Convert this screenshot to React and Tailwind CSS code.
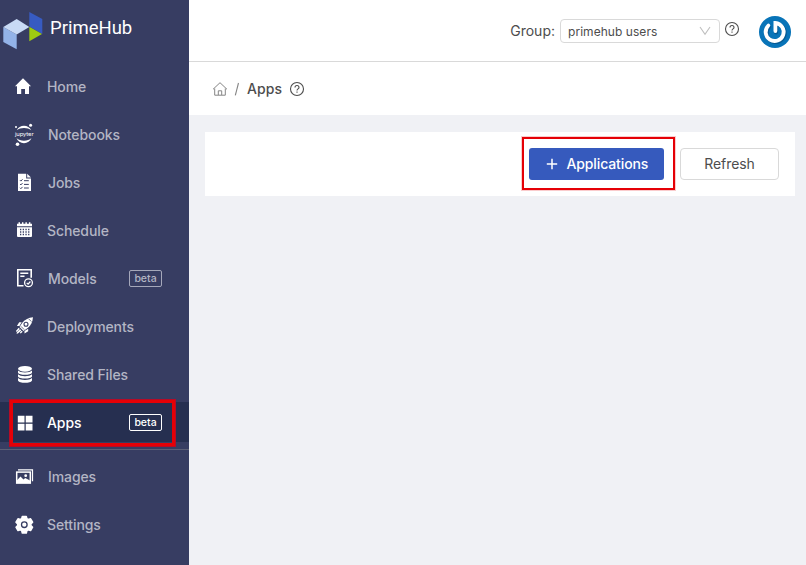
import React from 'react';

function Icon({ children }) {
  return (
    <svg width="24" height="24" viewBox="0 0 24 24" fill="#fff" className="shrink-0">
      {children}
    </svg>
  );
}

const HomeIcon = (
  <Icon>
    <path d="M11 3.200 19 11.200h-2V19h-4v-5H9.200v5H5v-7.800H3z" />
  </Icon>
);

const JupyterIcon = (
  <Icon>
    <path d="M4.800 7.300C6.100 4.300 8.800 2.700 12 2.700s5.900 1.600 7.200 4.600C17.300 5.700 15 5 12 5s-5.300.7-7.200 2.300z" />
    <path d="M4.500 15.100C5.800 18.400 8.600 20.300 12 20.300s6.200-1.900 7.500-5.200c-1.900 1.800-4.500 2.700-7.500 2.700s-5.600-.9-7.500-2.700z" />
    <circle cx="18.600" cy="2.200" r="1.500" />
    <circle cx="4" cy="4" r="1" />
    <circle cx="5.500" cy="21.200" r="1.800" />
    <text x="3" y="12.900" fontSize="5" textLength="18.500" lengthAdjust="spacingAndGlyphs" className="font-['Inter',sans-serif] font-normal">
      jupyter
    </text>
  </Icon>
);

const JobsIcon = (
  <Icon>
    <path d="M6 2.800h8.200V7.500H19V20H6z" />
    <path d="M15.200 2.800 19 6.500h-3.800z" />
    <path d="m8 9.200.9.9 1.600-1.800M8 13l.9.900 1.600-1.800M8 16.800l.9.900 1.600-1.800M12 9.700h4.800M12 13.400h4.800M12 17h4.800" stroke="#373d62" strokeWidth="1" fill="none" />
  </Icon>
);

const ScheduleIcon = (
  <Icon>
    <path d="M5 4.700h1.500V3.200h1.500v1.500h2V3.200h1.400v1.500h2V3.200h1.500v1.500h2V3.200h1.500v1.500H20v2.500H5z" />
    <path d="M5 8.300h15v8.700a1 1 0 0 1-1 1H6a1 1 0 0 1-1-1z" />
    <path d="M8 10.500h9.500M8 13h9.500M8 15.500h9.500" stroke="#373d62" strokeWidth="1.300" strokeDasharray="1.300 1.400" />
  </Icon>
);

const ModelsIcon = (
  <Icon>
    <g fill="none" stroke="#fff" strokeWidth="1.600">
      <path d="M11.500 18.800H5.800V2.800h13.400v8" />
      <path d="M8.300 6.200h8M8.300 9.300h4.200" strokeWidth="1.500" />
      <circle cx="16.500" cy="15.800" r="3.900" strokeWidth="1.300" />
      <path d="m14.700 15.800 1.400 1.400 2.300-2.700" strokeWidth="1.200" />
    </g>
  </Icon>
);

const RocketIcon = (
  <Icon>
    <path d="M21 2.300c-4.500.4-8 2.200-10.500 5.200L7.500 12l4 4 4.500-3.200c3-2.500 4.600-6 5-10.500z" />
    <path d="M9.700 7.300H7.200L4.900 11h2.500zM16.200 13.700v2.500l-3.700 2.300v-2.500zM6.700 12.800l1.100 1.100-3 3-.9-.9zM9.600 15.700l1.100 1.100-2 1.800-.9-.9zM8.200 14.300l1.100 1.100-3.400 3.200-1.300.1.200-1.200z" />
    <circle cx="14" cy="9.200" r="2" fill="none" stroke="#373d62" strokeWidth="1.100" />
    <path d="m8.900 11.300 3.300 3.300M16.700 3.900l2.700 2.700" stroke="#373d62" strokeWidth=".7" />
  </Icon>
);

const DatabaseIcon = (
  <Icon>
    <ellipse cx="13" cy="5.800" rx="7" ry="2.900" />
    <path d="M6 7.500c2 2.600 12 2.600 14 0v2.200c-1 2.800-13 2.800-14 0zM6 11.300c2 2.600 12 2.600 14 0v2.200c-1 2.800-13 2.800-14 0zM6 15.100c2 2.600 12 2.600 14 0v2.300c-1 3.200-13 3.200-14 0z" />
  </Icon>
);

const AppsIcon = (
  <Icon>
    <path d="M5.800 4.700h6.700v6.800H5.800zM13.700 4.700h6.800v6.800h-6.800zM5.800 12.700h6.700v6.800H5.800zM13.700 12.700h6.800v6.800h-6.800z" />
  </Icon>
);

const ImagesIcon = (
  <Icon>
    <path d="M6 4.900h14.500v11.300" fill="none" stroke="#fff" strokeWidth="1.200" />
    <rect x="4.700" y="7.100" width="13.600" height="11" fill="none" stroke="#fff" strokeWidth="1.500" />
    <path d="M5 15.300l3.500-3.800 3 3 1.700-1.500 4.800 2.500V18H5z" />
    <circle cx="13.700" cy="10.700" r="1.400" />
  </Icon>
);

const SettingsIcon = (
  <Icon>
    <path
      stroke="#fff"
      strokeWidth="1.500"
      strokeLinejoin="round"
      d="M10.300 3.400h4l.6 2.300 1.300.8 2.400-.7 2 3.400-1.700 1.700v1.600l1.700 1.700-2 3.400-2.400-.7-1.300.8-.6 2.300h-4l-.6-2.300-1.300-.8-2.400.7-2-3.400 1.700-1.700v-1.600L4 9.200l2-3.400 2.400.7 1.300-.8z"
    />
    <circle cx="12.300" cy="11.700" r="2.800" fill="none" stroke="#373d62" strokeWidth="1.300" />
  </Icon>
);

function QuestionIcon() {
  return (
    <svg width="16" height="16" viewBox="0 0 16 16" fill="none" stroke="#4d4d4d" strokeWidth="1.100" className="shrink-0">
      <circle cx="8" cy="8" r="6.500" />
      <path d="M6 6.500c0-2.600 4-2.600 4 0 0 1.400-2 1.400-2 3" />
      <path d="M8 10.500v1.200" />
    </svg>
  );
}

function NavItem({ icon, label, beta, active, className }) {
  return (
    <div className={`flex h-10 shrink-0 items-center pt-0.5 pl-3 text-sm font-medium tracking-[-0.100px] ${active ? 'bg-[#262f50] text-white' : 'text-[#b3b5c4]'}`}>
      {icon}
      <span className={`whitespace-nowrap ${className}`}>{label}</span>
      {beta && (
        <span className={`mr-[27px] mb-px ml-auto flex h-[17px] w-[33px] items-center justify-center rounded-[2px] border pt-px text-[10.500px] leading-none tracking-normal ${active ? 'border-white' : 'border-[#a5a8ba]'}`}>
          beta
        </span>
      )}
    </div>
  );
}

function Sidebar() {
  return (
    <aside className="relative flex w-[189px] shrink-0 flex-col bg-[#373d62]">
      <div className="flex h-[66px] shrink-0 items-start pt-3 pl-[3px]">
        <svg width="40" height="38" viewBox="0 0 40 38" className="shrink-0">
          <path d="M.3 15 13.700 22.500V37.300L.3 30z" fill="#93b3e8" />
          <path d="M13.700 7 26.300 15 13.700 22.500.3 15z" fill="#c8daf5" />
          <path d="M26.300 0 39.300 7V22L26.300 14.500z" fill="#375bc2" />
          <path d="M26.300 14.800 39 22 26.300 29.300z" fill="#9ecb12" />
        </svg>
        <span className="mt-[3px] ml-[7px] font-['Roboto',sans-serif] text-[18.500px] leading-[26px] text-white">PrimeHub</span>
      </div>
      <nav className="flex flex-col gap-2">
        <NavItem icon={HomeIcon} label="Home" className="ml-[11px]" />
        <NavItem icon={JupyterIcon} label="Notebooks" className="ml-3" />
        <NavItem icon={JobsIcon} label="Jobs" className="ml-3" />
        <NavItem icon={ScheduleIcon} label="Schedule" className="ml-[11px]" />
        <NavItem icon={ModelsIcon} label="Models" beta className="ml-3" />
        <NavItem icon={RocketIcon} label="Deployments" className="ml-[11px]" />
        <NavItem icon={DatabaseIcon} label="Shared Files" className="ml-[11px]" />
        <NavItem icon={AppsIcon} label="Apps" beta active className="ml-[11px]" />
      </nav>
      <div className="mt-[7px] mb-1.5 h-px shrink-0 bg-[#5c5f76]" />
      <nav className="flex flex-col gap-2">
        <NavItem icon={ImagesIcon} label="Images" className="ml-3" />
        <NavItem icon={SettingsIcon} label="Settings" className="ml-[11px]" />
      </nav>
      <div className="absolute top-[399px] left-[9px] h-12 w-[167px] border-4 border-[#e50006] outline-1 -outline-offset-1 outline-[#b50b27]" />
    </aside>
  );
}

function Header() {
  return (
    <header className="flex h-[62px] shrink-0 items-center justify-end border-b border-[#d9d9d9] bg-white pr-[15px]">
      <span className="mr-[5px] text-sm text-[#4d4d4d]">Group:</span>
      <div className="flex h-6 w-40 items-center justify-between rounded border border-[#d9d9d9] pr-[8px] pl-[7px] text-xs text-[#4d4d4d]">
        <span className="pt-0.5 tracking-[0.050px]">primehub users</span>
        <svg width="12" height="12" viewBox="0 0 12 12" fill="none" stroke="#bfbfbf" strokeWidth="1.100">
          <path d="m1 2 5 7.300L11 2" />
        </svg>
      </div>
      <div className="mr-[19px] mb-[3px] ml-1">
        <QuestionIcon />
      </div>
      <svg width="32" height="32" viewBox="0 0 32 32" className="mt-0.5">
        <circle cx="16" cy="16" r="16" fill="#0874b8" />
        <g fill="none" strokeLinecap="round">
          <path d="M9.700 9.800A9 9 0 1 0 16.700 7V15.500" stroke="#075b94" strokeWidth="4.200" transform="translate(.4 .9)" />
          <path d="M9.400 9.500A9 9 0 1 0 16.400 7V15" stroke="#fff" strokeWidth="3.800" />
        </g>
      </svg>
    </header>
  );
}

function Breadcrumb() {
  return (
    <div className="flex h-[53px] shrink-0 items-center bg-white pl-[23px] text-sm">
      <svg width="16" height="16" viewBox="0 0 16 16" fill="none" stroke="#858585" strokeWidth="1">
        <path d="M1 8.300 8 1.700l7 6.600M2.700 7.500v6.700h10.600V7.500M6.300 14v-4.200h3.400V14" />
      </svg>
      <svg width="6" height="14" viewBox="0 0 6 14" fill="none" stroke="#858585" strokeWidth="1.100" className="ml-[6px]">
        <path d="M4.500 1 1.300 13.300" />
      </svg>
      <span className="ml-[7px] font-medium tracking-[0.100px] text-[#4d4d4d]">Apps</span>
      <div className="ml-[7px]">
        <QuestionIcon />
      </div>
    </div>
  );
}

function Toolbar() {
  return (
    <div className="mt-[17px] mr-[11px] ml-4 flex h-16 shrink-0 items-center justify-end bg-white pr-4 text-sm">
      <div className="relative">
        <button className="flex h-8 w-[135px] items-center rounded-[3px] bg-[#365abd] pl-[17px] font-medium tracking-[-0.120px] text-white">
          <svg width="12" height="12" viewBox="0 0 12 12" stroke="#fff" strokeWidth="1.500">
            <path d="M6 .8v10.400M.8 6h10.400" />
          </svg>
          <span className="ml-[8.500px]">Applications</span>
        </button>
        <div className="absolute -top-[11px] -left-[7px] h-[53px] w-[153px] border-2 border-[#e50006] outline-1 outline-[#e50006]/20" />
      </div>
      <button className="ml-4 h-8 w-[99px] rounded border border-[#d9d9d9] bg-white tracking-[-0.050px] text-[#4d4d4d]">Refresh</button>
    </div>
  );
}

export default function App() {
  return (
    <div className="flex h-[565px] w-[806px] overflow-hidden bg-[#f0f1f5] font-['Inter','Liberation_Sans',sans-serif]">
      <Sidebar />
      <main className="flex min-w-0 flex-1 flex-col">
        <Header />
        <Breadcrumb />
        <Toolbar />
      </main>
    </div>
  );
}
